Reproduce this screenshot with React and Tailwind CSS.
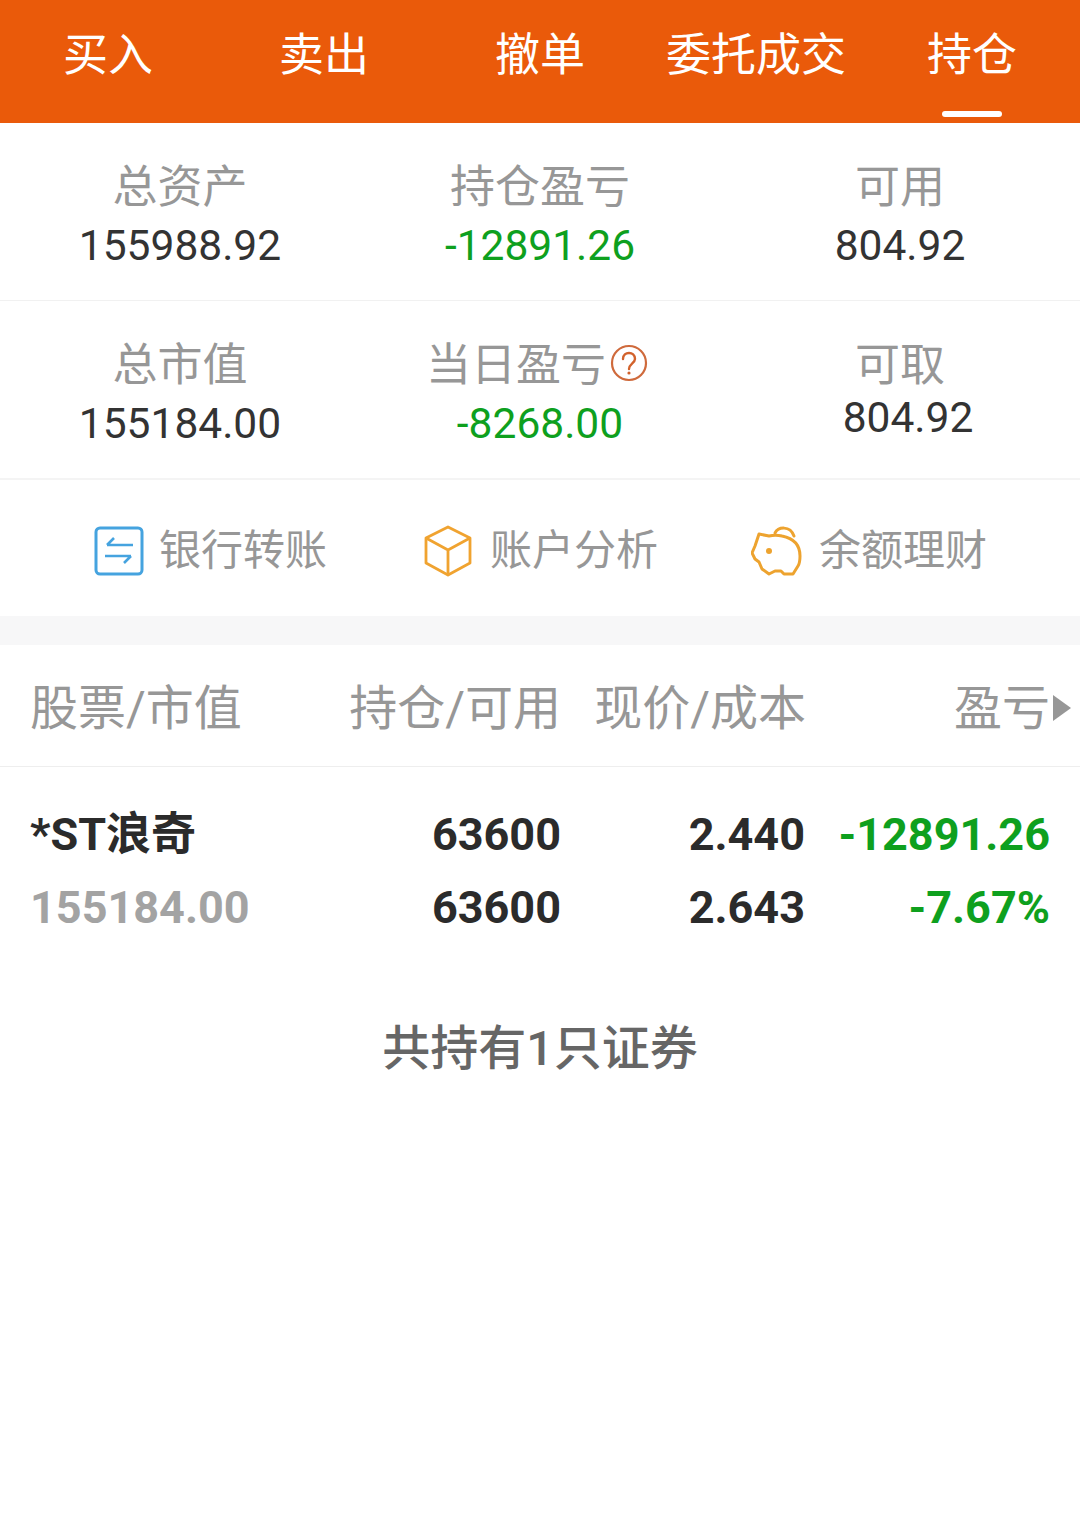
const cjk = "font-['Roboto','Noto_Sans_CJK_SC',sans-serif]";

const tabs = ["买入", "卖出", "撤单", "委托成交", "持仓"];

function Stat({ label, value, green, help }) {
  return (
    <div className="flex flex-col items-center">
      <div className={`flex items-center h-[50px] text-[45px] leading-[50px] text-[#979797] ${help ? "mr-[6px]" : ""}`}>
        {label}
        {help && (
          <svg width="38" height="38" viewBox="0 0 38 38" fill="none" className="ml-[4px] -mt-[6px]">
            <circle cx="19" cy="19" r="17" stroke="#cf6a3c" strokeWidth="2.2" />
            <path d="M13 15c0-4 3-6 6-6s6 2 6 6c0 4-6 5-6 10" stroke="#d2622c" strokeWidth="2.4" strokeLinecap="round" />
            <circle cx="19" cy="29" r="1.6" fill="#d2622c" />
          </svg>
        )}
      </div>
      <div className={`h-[46px] mt-[10px] text-[42.5px] leading-[46px] ${green ? "text-[#0ea01e]" : "text-[#333333]"}`}>
        {value}
      </div>
    </div>
  );
}

function BankIcon() {
  return (
    <svg width="50" height="50" viewBox="0 0 50 50" fill="none">
      <rect x="2" y="2" width="46" height="46" rx="4" stroke="#45a3df" strokeWidth="3" />
      <path d="M13 19h26M13 19l7-7" stroke="#45a3df" strokeWidth="2.6" />
      <path d="M11 30h26M37 30l-7 7" stroke="#45a3df" strokeWidth="2.6" />
    </svg>
  );
}

function BoxIcon() {
  return (
    <svg width="50" height="52" viewBox="0 0 50 52" fill="none" stroke="#f0a330" strokeWidth="2.8" strokeLinejoin="round">
      <path d="M25 2L47 13V38L25 50L3 38V13Z" />
      <path d="M3 13L25 25L47 13M25 25V50" />
    </svg>
  );
}

function PigIcon() {
  return (
    <svg width="52" height="52" viewBox="0 0 52 50" fill="none" stroke="#eda32f" strokeWidth="3" strokeLinejoin="round" strokeLinecap="round">
      <path d="M24 7c3-6 15-8 19 3" />
      <path d="M8 8l10 2c4-1 9-1 13 0 10 2 18 8 18 20 0 4 0 7-2 10l-5 8H33l-3-3h-6l-6 3-7-5-3-7-4-3-3-6 3-7Z" />
      <circle cx="18" cy="25" r="3" fill="#eda32f" stroke="none" />
    </svg>
  );
}

function Action({ icon, label, className }) {
  return (
    <div className={`flex items-center h-[50px] ${className}`}>
      {icon}
      <span className="text-[42px] leading-[50px] text-[#979797]">{label}</span>
    </div>
  );
}

export default function App() {
  return (
    <div className={`w-[1080px] h-[1521px] bg-white overflow-hidden ${cjk}`}>
      <div className="relative grid grid-cols-5 h-[123px] bg-[#ea5a0a] text-white text-[45px] leading-[50px]">
        {tabs.map((t) => (
          <div key={t} className="flex justify-center pt-[31px]">{t}</div>
        ))}
        <div className="absolute left-[942px] top-[111px] w-[60px] h-[6px] rounded-full bg-white" />
      </div>

      <div className="grid grid-cols-3 h-[178px] pt-[40px] border-b border-[#f1f1f1]">
        <Stat label="总资产" value="155988.92" />
        <Stat label="持仓盈亏" value="-12891.26" green />
        <Stat label="可用" value="804.92" />
      </div>
      <div className="grid grid-cols-3 h-[179px] pt-[40px] border-b-2 border-[#f4f4f4]">
        <Stat label="总市值" value="155184.00" />
        <Stat label="当日盈亏" value="-8268.00" green help />
        <div className="flex flex-col items-center">
          <div className="h-[50px] text-[45px] leading-[50px] text-[#979797]">可取</div>
          <div className="h-[46px] mt-[4px] pl-4 text-[42.5px] leading-[46px] text-[#333333]">804.92</div>
        </div>
      </div>

      <div className="flex items-start h-[136px] pl-[94px] pt-[46px]">
        <Action icon={<BankIcon />} label="银行转账" className="gap-[15px] mr-[96px]" />
        <Action icon={<BoxIcon />} label="账户分析" className="gap-[17px] mr-[93px]" />
        <Action icon={<PigIcon />} label="余额理财" className="gap-[16px]" />
      </div>
      <div className="h-[29px] bg-[#f7f7f8]" />

      <div className="relative grid grid-cols-[319px_212px_245px_1fr] h-[122px] px-[30px] pt-[37px] border-b border-[#eeeeee] text-[48px] leading-[54px] text-[#979797] whitespace-nowrap">
        <div>股票/市值</div>
        <div className="text-right">持仓/可用</div>
        <div className="text-right">现价/成本</div>
        <div className="text-right">盈亏</div>
        <div className="absolute left-[1053px] top-[50px] w-0 h-0 border-y-[13px] border-y-transparent border-l-[18px] border-l-[#979797]" />
      </div>

      <div className="grid grid-cols-[320px_211px_244px_1fr] px-[30px] pt-[41px] gap-y-[19px] text-[45px] leading-[54px] font-bold text-[#2b2b2b]">
        <div>*ST浪奇</div>
        <div className="text-right">63600</div>
        <div className="text-right">2.440</div>
        <div className="text-right text-[#0ea01e]">-12891.26</div>
        <div className="text-[#a3a3a3]">155184.00</div>
        <div className="text-right">63600</div>
        <div className="text-right">2.643</div>
        <div className="text-right text-[#0ea01e]">-7.67%</div>
      </div>

      <div className="mt-[87px] text-center text-[48px] leading-[54px] font-medium text-[#666666]">共持有1只证券</div>
    </div>
  );
}
